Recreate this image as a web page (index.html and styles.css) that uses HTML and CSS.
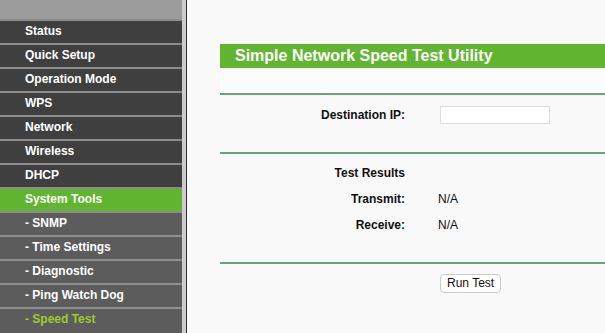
FILE: index.html
```html
<!DOCTYPE html>
<html lang="en">
<head>
    <meta charset="UTF-8">
    <title>Speed Test</title>
    <link rel="stylesheet" href="styles.css">
</head>
<body>

<div class="menu">
    <div class="menu-top"></div>
    <div class="item">Status</div>
    <div class="item">Quick Setup</div>
    <div class="item">Operation Mode</div>
    <div class="item">WPS</div>
    <div class="item">Network</div>
    <div class="item">Wireless</div>
    <div class="item">DHCP</div>
    <div class="item active">System Tools</div>
    <div class="item sub">- SNMP</div>
    <div class="item sub">- Time Settings</div>
    <div class="item sub">- Diagnostic</div>
    <div class="item sub">- Ping Watch Dog</div>
    <div class="item sub current">- Speed Test</div>
</div>
<div class="divider"></div>

<div class="main">
    <div class="title">Simple Network Speed Test Utility</div>
    <div class="title-space"></div>

    <div class="section dest">
        <div class="row">
            <label for="destip">Destination IP:</label>
            <input type="text" id="destip">
        </div>
    </div>

    <div class="section results">
        <div class="row head"><label>Test Results</label></div>
        <div class="row"><label>Transmit:</label><span>N/A</span></div>
        <div class="row"><label>Receive:</label><span>N/A</span></div>
    </div>

    <div class="actions">
        <button type="button">Run Test</button>
    </div>
</div>

</body>
</html>
```

FILE: styles.css
```css
body {
    font-family: "Liberation Sans", Arial, sans-serif;
    background-color: #f9f9f9;
    margin: 0;
    padding: 0;
    display: flex;
    height: 333px;
    overflow: hidden;
}
.menu {
    width: 182px;
    flex-shrink: 0;
    background-color: #5c5c5c;
    border-right: 4px solid #cbcbcb;
}
.menu-top {
    height: 19px;
    background-color: #9b9b9b;
}
.item {
    height: 22px;
    line-height: 21px;
    border-top: 2px solid #8c8c8c;
    background-color: #3f3f3f;
    color: #ffffff;
    font-size: 12px;
    font-weight: bold;
    padding-left: 25px;
    white-space: nowrap;
}
.item.sub {
    background-color: #5c5c5c;
}
.item.active {
    background-color: #62b531;
}
.item.current {
    color: #9ccc2c;
}
.divider {
    width: 1px;
    flex-shrink: 0;
    background-color: #2e2e2e;
    border-right: 1px solid #ffffff;
}
.main {
    flex: 1;
    padding-left: 32px;
    padding-top: 44px;
}
.title {
    height: 24px;
    line-height: 24px;
    background-color: #62b531;
    color: #ffffff;
    font-size: 16px;
    font-weight: bold;
    padding-left: 15px;
}
.title-space {
    height: 25px;
    background-color: #fcfcfc;
}
.section {
    border-top: 2px solid #69a37f;
}
.row {
    display: grid;
    grid-template-columns: 185px auto;
    column-gap: 33px;
    align-items: center;
    font-size: 12px;
}
.row label {
    text-align: right;
    font-weight: bold;
    color: #111;
}
.row span {
    color: #111;
}
.dest {
    height: 57px;
}
.dest .row {
    height: 39px;
}
.dest input {
    width: 110px;
    height: 18px;
    box-sizing: border-box;
    border: 1px solid #dddddd;
    background-color: #ffffff;
    margin-left: 2px;
}
.results {
    height: 110px;
    padding-top: 6px;
    box-sizing: border-box;
}
.results .row {
    height: 26px;
}
.actions {
    border-top: 2px solid #69a37f;
    padding-top: 9px;
    padding-left: 220px;
}
button {
    font-family: "Liberation Sans", Arial, sans-serif;
    font-size: 12px;
    height: 19px;
    padding: 0 6px;
    background-color: #ffffff;
    border: 1px solid #cccccc;
    border-radius: 4px;
    color: #111;
}
```
